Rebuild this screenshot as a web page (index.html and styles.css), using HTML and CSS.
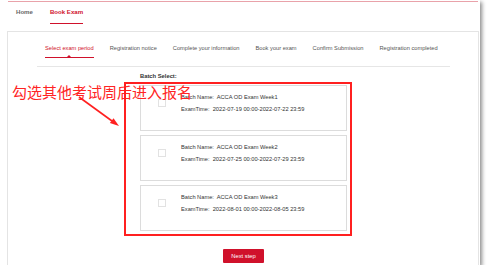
FILE: index.html
```html
<!DOCTYPE html>
<html lang="en">
<head>
<meta charset="utf-8">
<title>Book Exam</title>
<link rel="stylesheet" href="styles.css">
</head>
<body>
<div class="shot">
  <div class="topline"></div>
  <nav class="nav">
    <a class="nav-item">Home</a>
    <a class="nav-item active">Book Exam</a>
  </nav>
  <section class="card">
    <div class="steps">
      <span class="step active">Select exam period</span>
      <span class="step">Registration notice</span>
      <span class="step">Complete your information</span>
      <span class="step">Book your exam</span>
      <span class="step">Confirm Submission</span>
      <span class="step">Registration completed</span>
    </div>
    <div class="content">
      <div class="label">Batch Select:</div>
      <div class="batch">
        <span class="check"></span>
        <div class="info">
          <div>Batch Name:&nbsp; ACCA OD Exam Week1</div>
          <div>ExamTime:&nbsp; 2022-07-19 00:00-2022-07-22 23:59</div>
        </div>
      </div>
      <div class="batch">
        <span class="check"></span>
        <div class="info">
          <div>Batch Name:&nbsp; ACCA OD Exam Week2</div>
          <div>ExamTime:&nbsp; 2022-07-25 00:00-2022-07-29 23:59</div>
        </div>
      </div>
      <div class="batch">
        <span class="check"></span>
        <div class="info">
          <div>Batch Name:&nbsp; ACCA OD Exam Week3</div>
          <div>ExamTime:&nbsp; 2022-08-01 00:00-2022-08-05 23:59</div>
        </div>
      </div>
      <button class="next">Next step</button>
    </div>
  </section>
  <div class="annot-text">勾选其他考试周后进入报名</div>
  <svg class="annot-arrow" width="50" height="40" viewBox="0 0 50 40">
    <line x1="4" y1="4" x2="37" y2="28" stroke="#ff2020" stroke-width="1.6"/>
    <polygon points="44,33 34.9,30.1 38.5,25.3" fill="#ff2020"/>
  </svg>
  <div class="annot-box"></div>
</div>
</body>
</html>
```
FILE: styles.css
```css
* { box-sizing: border-box; }
html, body { margin: 0; padding: 0; background: #ffffff; }
body { font-family: "Liberation Sans", Arial, sans-serif; }

.shot {
  position: relative;
  width: 480px;
  height: 265px;
  background: #fff;
  box-shadow: 2px 2px 4px rgba(0,0,0,0.45);
  display: flex;
  flex-direction: column;
  overflow: hidden;
}
.topline {
  margin: 1px 2px 0 8px;
  height: 1px;
  background: #e9a2aa;
  flex: none;
}
.nav {
  height: 29px;
  flex: none;
  display: flex;
  align-items: flex-start;
  gap: 17px;
  padding-left: 16px;
}
.nav-item {
  font-size: 6.1px;
  font-weight: bold;
  color: #666;
  line-height: 10px;
  padding-top: 5px;
  padding-bottom: 6px;
  border-bottom: 1px solid transparent;
}
.nav-item.active {
  color: #d0112b;
  border-bottom-color: #d0112b;
}
.card {
  margin-left: 7px;
  width: 472px;
  flex: 1;
  border: 1px solid #e4e4e4;
  border-bottom: none;
}
.steps {
  margin-left: 29px;
  width: 413px;
  display: flex;
  gap: 16px;
  padding: 12px 0 8px 8px;
  border-bottom: 1px solid #e6e6e6;
}
.step {
  position: relative;
  font-size: 5.7px;
  line-height: 8px;
  color: #555;
  padding-bottom: 5px;
  border-bottom: 1px solid transparent;
  white-space: nowrap;
}
.step.active {
  color: #d0112b;
  border-bottom-color: #d0112b;
}
.step.active::after {
  content: "";
  position: absolute;
  left: 50%;
  bottom: 0;
  margin-left: -2px;
  border-left: 2px solid transparent;
  border-right: 2px solid transparent;
  border-bottom: 2px solid #d0112b;
}
.content {
  margin-left: 132px;
  width: 207px;
  display: flex;
  flex-direction: column;
}
.label {
  font-size: 5.8px;
  font-weight: bold;
  color: #333;
  line-height: 8px;
  margin: 5px 0 5px 0;
}
.batch {
  height: 46px;
  border: 1px solid #dcdcdc;
  padding: 5px 0 0 17px;
  display: flex;
  align-items: flex-start;
  margin-bottom: 4px;
}
.check {
  width: 8px;
  height: 8px;
  border: 1px solid #e2e2e2;
  background: #fff;
  margin-top: 8px;
  flex: none;
}
.info {
  margin-left: 15px;
  font-size: 5.7px;
  line-height: 12px;
  color: #333;
  white-space: nowrap;
}
.next {
  align-self: center;
  margin-top: 14px;
  width: 41px;
  height: 14px;
  border: none;
  border-radius: 1px;
  background: #d0112b;
  color: #fff;
  font-family: "Liberation Sans", Arial, sans-serif;
  font-size: 5.8px;
  padding: 0;
}
.annot-text {
  position: absolute;
  left: 12px;
  top: 84px;
  font-family: "Noto Sans CJK SC", sans-serif;
  font-size: 15px;
  line-height: 15px;
  color: #ff2424;
  white-space: nowrap;
}
.annot-arrow {
  position: absolute;
  left: 75px;
  top: 93px;
}
.annot-box {
  position: absolute;
  left: 124px;
  top: 82px;
  width: 228px;
  height: 154px;
  border: 2px solid #ff2020;
}
```
